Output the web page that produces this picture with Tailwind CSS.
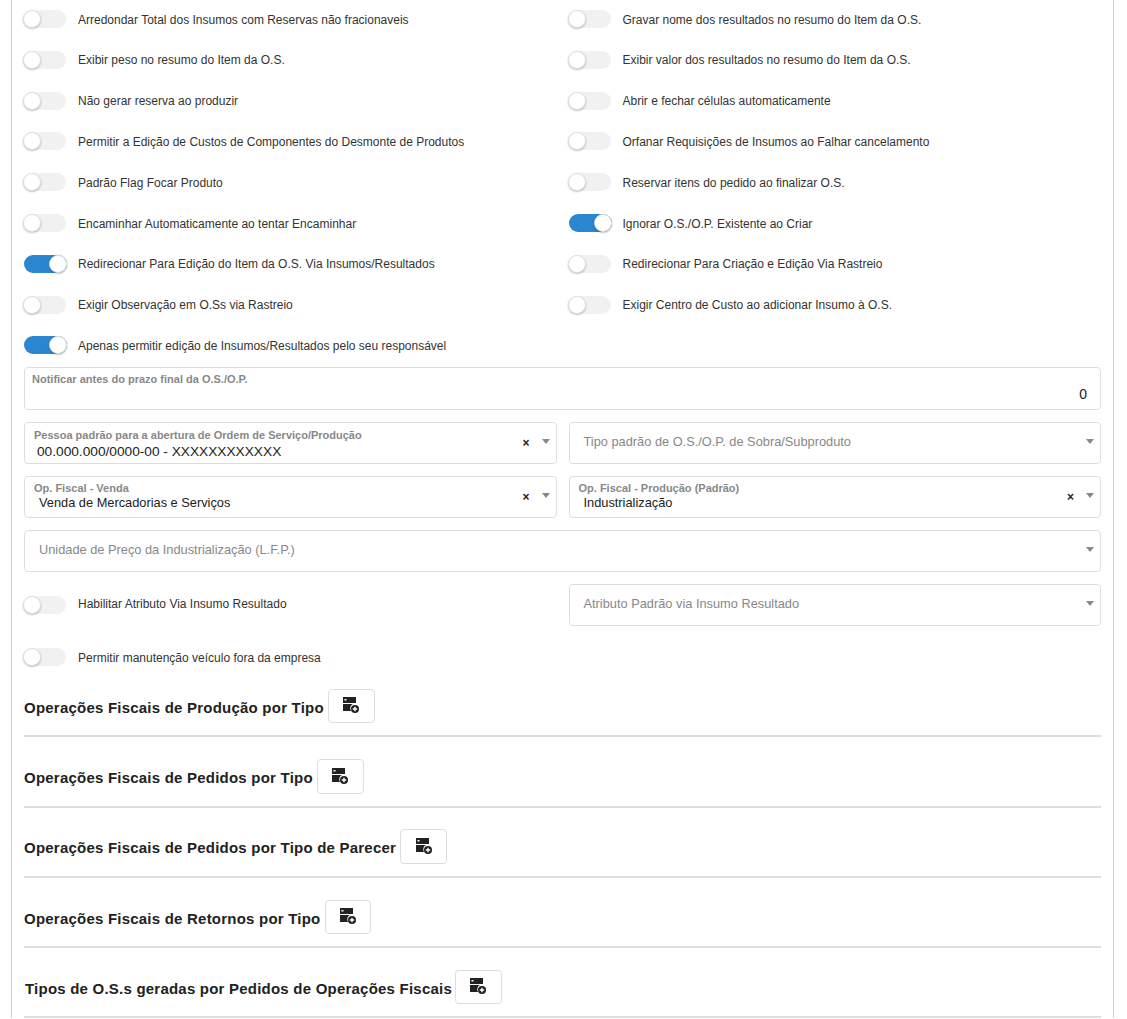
<!DOCTYPE html>
<html lang="pt-BR">
<head>
  <meta charset="UTF-8">
  <meta name="viewport" content="width=device-width, initial-scale=1.0" />
  <script src="https://cdn.jsdelivr.net/npm/@tailwindcss/browser@4"></script>
  <title>Configurações de Produção</title>
</head>
<body class="bg-white font-['Liberation_Sans',Arial,sans-serif] overflow-hidden">
<div class="h-[1019px] overflow-hidden">
  <div class="ml-[11px] w-[1103px] border-x border-[#d0d0d0] px-3 -mt-[0.7px]">

    <div id="switches" class="grid grid-cols-2 gap-x-3 text-xs text-[#333]"></div>

    <div class="mt-[1px] h-[43px] border border-[#dedede] rounded-[4px] relative">
      <span class="absolute left-[7px] top-[3px] text-[11px] font-bold text-[#888]">Notificar antes do prazo final da O.S./O.P.</span>
      <span class="absolute right-[13px] bottom-[5px] text-sm text-[#222]">0</span>
    </div>

    <div class="grid grid-cols-2 gap-x-3 mt-3">
      <div class="h-[42px] border border-[#dedede] rounded-[4px] relative">
        <span class="absolute left-[9px] top-[4px] text-[11px] font-bold text-[#888]">Pessoa padrão para a abertura de Ordem de Serviço/Produção</span>
        <span class="absolute left-[12px] top-[19px] text-[13.7px] text-[#222]">00.000.000/0000-00 - XXXXXXXXXXXX</span>
        <span class="absolute right-[26px] top-[12px] text-xs font-bold text-[#222]">×</span>
        <span class="absolute right-[6px] top-[16px] w-0 h-0 border-x-[4px] border-x-transparent border-t-[5px] border-t-[#888]"></span>
      </div>
      <div class="h-[42px] border border-[#dedede] rounded-[4px] relative flex items-center pl-[14px] pb-[3px] text-[12.8px] text-[#888]">
        Tipo padrão de O.S./O.P. de Sobra/Subproduto
        <span class="absolute right-[6px] top-[16px] w-0 h-0 border-x-[4px] border-x-transparent border-t-[5px] border-t-[#888]"></span>
      </div>
    </div>

    <div class="grid grid-cols-2 gap-x-3 mt-3">
      <div class="h-[42px] border border-[#dedede] rounded-[4px] relative">
        <span class="absolute left-[9px] top-[3px] text-[11px] font-bold text-[#888]">Op. Fiscal - Venda</span>
        <span class="absolute left-[14px] top-[16px] text-[12.8px] text-[#222]">Venda de Mercadorias e Serviços</span>
        <span class="absolute right-[26px] top-[12px] text-xs font-bold text-[#222]">×</span>
        <span class="absolute right-[6px] top-[16px] w-0 h-0 border-x-[4px] border-x-transparent border-t-[5px] border-t-[#888]"></span>
      </div>
      <div class="h-[42px] border border-[#dedede] rounded-[4px] relative">
        <span class="absolute left-[9px] top-[3px] text-[11px] font-bold text-[#888]">Op. Fiscal - Produção (Padrão)</span>
        <span class="absolute left-[14px] top-[16px] text-[12.8px] text-[#222]">Industrialização</span>
        <span class="absolute right-[26px] top-[12px] text-xs font-bold text-[#222]">×</span>
        <span class="absolute right-[6px] top-[16px] w-0 h-0 border-x-[4px] border-x-transparent border-t-[5px] border-t-[#888]"></span>
      </div>
    </div>

    <div class="h-[42px] mt-3 border border-[#dedede] rounded-[4px] relative flex items-center pl-[14px] pb-[3px] text-[12.8px] text-[#888]">
      Unidade de Preço da Industrialização (L.F.P.)
      <span class="absolute right-[6px] top-[16px] w-0 h-0 border-x-[4px] border-x-transparent border-t-[5px] border-t-[#888]"></span>
    </div>

    <div class="grid grid-cols-2 gap-x-3 mt-3 items-center">
      <div class="flex items-center text-xs text-[#333]">
        <span class="-ml-px w-[43px] h-[18px] rounded-full bg-[#f1f1f1] relative shrink-0"><span class="absolute left-0 top-0 w-[18px] h-[18px] rounded-full bg-white border border-[#e0e0e0] shadow-[0_1px_2px_rgba(0,0,0,0.25)]"></span></span>
        <span class="ml-[12px] pb-[2px]">Habilitar Atributo Via Insumo Resultado</span>
      </div>
      <div class="h-[42px] border border-[#dedede] rounded-[4px] relative flex items-center pl-[14px] pb-[3px] text-[12.8px] text-[#888]">
        Atributo Padrão via Insumo Resultado
        <span class="absolute right-[6px] top-[16px] w-0 h-0 border-x-[4px] border-x-transparent border-t-[5px] border-t-[#888]"></span>
      </div>
    </div>

    <div class="mt-[22px] flex items-center text-xs text-[#333]">
      <span class="-ml-px w-[43px] h-[18px] rounded-full bg-[#f1f1f1] relative shrink-0"><span class="absolute left-0 top-0 w-[18px] h-[18px] rounded-full bg-white border border-[#e0e0e0] shadow-[0_1px_2px_rgba(0,0,0,0.25)]"></span></span>
      <span class="ml-[12px] pt-[2px]">Permitir manutenção veículo fora da empresa</span>
    </div>

    <div id="sections"></div>
  </div>
</div>
<script>
  const switches = [
    ['Arredondar Total dos Insumos com Reservas não fracionaveis', 0],
    ['Gravar nome dos resultados no resumo do Item da O.S.', 0],
    ['Exibir peso no resumo do Item da O.S.', 0],
    ['Exibir valor dos resultados no resumo do Item da O.S.', 0],
    ['Não gerar reserva ao produzir', 0],
    ['Abrir e fechar células automaticamente', 0],
    ['Permitir a Edição de Custos de Componentes do Desmonte de Produtos', 0],
    ['Orfanar Requisições de Insumos ao Falhar cancelamento', 0],
    ['Padrão Flag Focar Produto', 0],
    ['Reservar itens do pedido ao finalizar O.S.', 0],
    ['Encaminhar Automaticamente ao tentar Encaminhar', 0],
    ['Ignorar O.S./O.P. Existente ao Criar', 1],
    ['Redirecionar Para Edição do Item da O.S. Via Insumos/Resultados', 1],
    ['Redirecionar Para Criação e Edição Via Rastreio', 0],
    ['Exigir Observação em O.Ss via Rastreio', 0],
    ['Exigir Centro de Custo ao adicionar Insumo à O.S.', 0],
    ['Apenas permitir edição de Insumos/Resultados pelo seu responsável', 1],
  ];
  const knob = 'absolute top-0 w-[18px] h-[18px] rounded-full bg-white border border-[#e0e0e0] shadow-[0_1px_2px_rgba(0,0,0,0.25)]';
  document.getElementById('switches').innerHTML = switches.map(([label, on]) => `
    <div class="h-[40.78px] flex items-center">
      ${on
        ? `<span class="-mt-px w-[43px] h-[18px] rounded-full bg-[#2a86d1] relative shrink-0"><span class="${knob} right-0"></span></span><span class="ml-[11px]">${label}</span>`
        : `<span class="-mt-px -ml-px w-[43px] h-[18px] rounded-full bg-[#f1f1f1] relative shrink-0"><span class="${knob} left-0"></span></span><span class="ml-[12px]">${label}</span>`}
    </div>`).join('');

  const icon = `<svg class="-mt-[2px]" width="16" height="16" viewBox="0 0 16 16" fill="#222"><path d="M0 0h13v6H0zM0 7h9.800a5 5 0 0 0-1.800 7H0z"/><circle cx="12" cy="12" r="4"/><path d="M11.300 9.800h1.400v1.500h1.500v1.400h-1.500v1.500h-1.400v-1.500H9.800v-1.400h1.500z" fill="#fff"/><rect x="1.500" y="2" width="2" height="1.500" fill="#fff"/></svg>`;
  const sections = [
    ['Operações Fiscais de Produção por Tipo', 'mt-[23px] gap-1', 'pt-[4px]', 'w-[47px] h-[34px]'],
    ['Operações Fiscais de Pedidos por Tipo', 'mt-[22px] gap-1', 'pt-[3px]', 'w-[47px] h-[35px]'],
    ['Operações Fiscais de Pedidos por Tipo de Parecer', 'mt-[21px] gap-1', 'pt-[3px]', 'w-[47px] h-[35px]'],
    ['Operações Fiscais de Retornos por Tipo', 'mt-[22px] gap-1', 'pt-[4px]', 'w-[46px] h-[34px]'],
    ['Tipos de O.S.s geradas por Pedidos de Operações Fiscais', 'mt-[22px] ml-px gap-[3px]', 'pt-[4px]', 'w-[47px] h-[34px]'],
  ];
  document.getElementById('sections').innerHTML = sections.map(([title, row, pad, size]) => `
    <div class="${row} flex items-center text-[15px] font-bold tracking-[0.22px] text-[#222]">
      <span class="${pad}">${title}</span>
      <button class="${size} border border-[#dedede] rounded-[4px] bg-white flex items-center justify-center">${icon}</button>
    </div>
    <hr class="mt-[12px] border-0 h-[2px] bg-[#dedede]">`).join('');
</script>
</body>
</html>
